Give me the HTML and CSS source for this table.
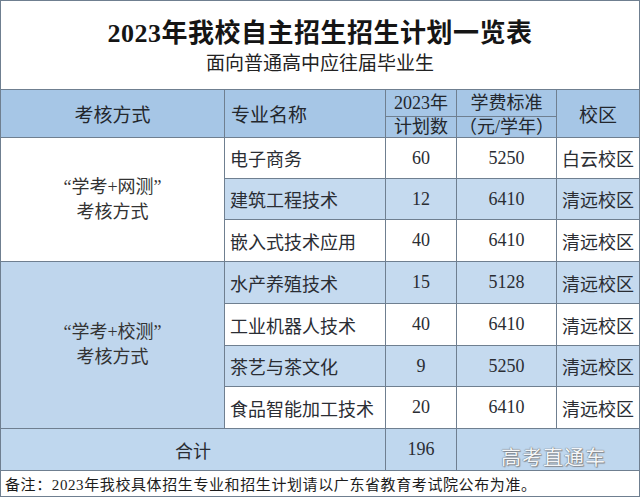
FILE: index.html
```html
<!DOCTYPE html>
<html lang="zh">
<head>
<meta charset="utf-8">
<link rel="stylesheet" href="styles.css">
</head>
<body>
<div class="sheet">
  <table class="plan">
    <colgroup>
      <col class="c1"><col class="c2"><col class="c3"><col class="c4"><col class="c5">
    </colgroup>
    <tr class="title-row">
      <td colspan="5" class="title-cell">
        <div class="title">2023年我校自主招生招生计划一览表</div>
        <div class="subtitle">面向普通高中应往届毕业生</div>
      </td>
    </tr>
    <tr class="head head-a">
      <th rowspan="2">考核方式</th>
      <th rowspan="2" class="left">专业名称</th>
      <th class="small">2023年</th>
      <th class="small">学费标准</th>
      <th rowspan="2">校区</th>
    </tr>
    <tr class="head head-b">
      <th class="small">计划数</th>
      <th class="small">（元/学年）</th>
    </tr>
    <tr class="r r1">
      <td rowspan="3" class="mode white">“学考+网测”<br>考核方式</td>
      <td class="name">电子商务</td><td class="num">60</td><td class="num">5250</td><td class="camp">白云校区</td>
    </tr>
    <tr class="r r2 blue">
      <td class="name">建筑工程技术</td><td class="num">12</td><td class="num">6410</td><td class="camp">清远校区</td>
    </tr>
    <tr class="r r3">
      <td class="name">嵌入式技术应用</td><td class="num">40</td><td class="num">6410</td><td class="camp">清远校区</td>
    </tr>
    <tr class="r r4 blue">
      <td rowspan="4" class="mode bluecell">“学考+校测”<br>考核方式</td>
      <td class="name">水产养殖技术</td><td class="num">15</td><td class="num">5128</td><td class="camp">清远校区</td>
    </tr>
    <tr class="r r5">
      <td class="name">工业机器人技术</td><td class="num">40</td><td class="num">6410</td><td class="camp">清远校区</td>
    </tr>
    <tr class="r r6 blue">
      <td class="name">茶艺与茶文化</td><td class="num">9</td><td class="num">5250</td><td class="camp">清远校区</td>
    </tr>
    <tr class="r r7">
      <td class="name">食品智能加工技术</td><td class="num">20</td><td class="num">6410</td><td class="camp">清远校区</td>
    </tr>
    <tr class="r total blue">
      <td colspan="2" class="sum">合计</td>
      <td class="num">196</td>
      <td colspan="2" class="wm-cell"><span class="watermark">高考直通车</span></td>
    </tr>
    <tr class="note-row">
      <td colspan="5" class="note">备注：2023年我校具体招生专业和招生计划请以广东省教育考试院公布为准。</td>
    </tr>
  </table>
</div>
</body>
</html>
```

FILE: styles.css
```css
html, body {
  margin: 0;
  padding: 0;
  background: #ffffff;
}

.sheet {
  width: 640px;
  height: 497px;
  overflow: hidden;
}

.plan {
  width: 639px;
  table-layout: fixed;
  border-collapse: collapse;
  font-family: "Liberation Serif", "Noto Sans CJK SC", serif;
  color: #2a2d33;
}

.c1 { width: 224px; }
.c2 { width: 161px; }
.c3 { width: 71px; }
.c4 { width: 100px; }
.c5 { width: 83px; }

.plan td, .plan th {
  border: 1px solid #6f7f90;
  padding: 0;
  font-weight: normal;
  text-align: center;
  vertical-align: middle;
}

.title-row td {
  border-color: #6f7f90;
  height: 88px;
}

.title-cell {
  background: #ffffff;
}

.title {
  font-size: 26px;
  font-weight: bold;
  color: #151515;
  line-height: 30px;
  margin-top: 4px;
  letter-spacing: 0.5px;
}

.subtitle {
  font-size: 19px;
  line-height: 24px;
  color: #222;
  margin-top: 3px;
}

.head th {
  background: #a6c6e6;
  font-size: 19px;
  color: #23272d;
}

.head-a th { height: 26px; }
.head-b th { height: 20px; }

.head th.small {
  font-size: 18px;
  line-height: 20px;
}

.head th.left {
  text-align: left;
  padding-left: 6px;
}

.r td {
  height: 40px;
  font-size: 18px;
}

.r3 td, .r4 td, .r5 td, .r7 td { height: 41px; }
.total td { height: 41px; }

.blue td {
  background: #c5daef;
}

.mode {
  font-size: 18px;
  line-height: 25px;
  color: #333;
}

.mode.white { background: #ffffff; }
.blue td.mode.bluecell, .mode.bluecell { background: #bfd6ed; }

.name {
  text-align: left !important;
  padding-left: 5px !important;
  white-space: nowrap;
}

.num {
  font-size: 18px;
}

.camp {
  white-space: nowrap;
}

.total td {
  background: #bfd7ee;
}

.total .wm-cell {
  position: relative;
  text-align: right;
  padding-right: 33px;
}

.watermark {
  font-family: "Noto Sans CJK SC", sans-serif;
  font-size: 20px;
  color: #f4f6f8;
  letter-spacing: 1px;
  text-shadow: 0 0 1px #6d7278, 0 0 1px #6d7278, 1px 1px 1px #8a8f95;
  position: relative;
  top: 7px;
}

.note-row td {
  height: 25px;
  background: #ffffff;
}

.note {
  text-align: left !important;
  padding-left: 4px !important;
  font-size: 15px;
  font-weight: bold;
  color: #1c1c1c;
  letter-spacing: 0.6px;
  white-space: nowrap;
}
```
